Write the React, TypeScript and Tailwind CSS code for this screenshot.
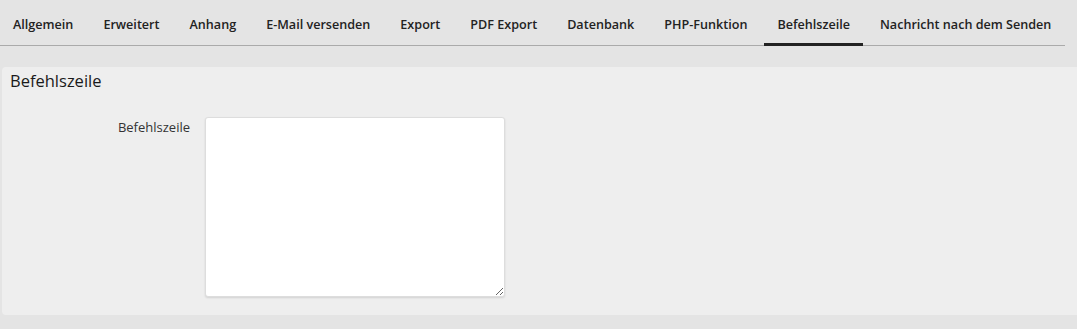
const tabs = [
  "Allgemein",
  "Erweitert",
  "Anhang",
  "E-Mail versenden",
  "Export",
  "PDF Export",
  "Datenbank",
  "PHP-Funktion",
  "Befehlszeile",
  "Nachricht nach dem Senden",
];

export default function App() {
  return (
    <div
      className="h-[329px] w-full overflow-hidden bg-[#e4e4e4] text-[#222]"
      style={{ fontFamily: '"Open Sans", sans-serif' }}
    >
      {/* tab bar */}
      <div className="mr-[12px] flex h-[46px] gap-[4px] border-b border-[#aaa]">
        {tabs.map((t) => (
          <div
            key={t}
            className={
              "flex h-[46px] items-center px-[13px] pt-[4px] text-[12.6px] font-semibold whitespace-nowrap " +
              (t === "Befehlszeile" ? "border-b-[3px] border-[#222] pt-[7px]" : "")
            }
          >
            {t}
          </div>
        ))}
      </div>

      {/* panel */}
      <div className="mt-[21px] ml-[2px] h-[248px] rounded-l-[4px] bg-[#eeeeee] px-[8px] pt-[3px]">
        <h2 className="text-[16.5px] leading-[22px] font-medium text-[#1a1a1a]">Befehlszeile</h2>
        <div className="mt-[25px] flex">
          <label className="w-[180px] pt-[1px] text-right text-[13px] leading-[18px] text-[#333]">
            Befehlszeile
          </label>
          <textarea className="ml-[15px] h-[180px] w-[300px] resize-y rounded-[3px] border border-[#ddd] bg-white shadow-[0_1px_2px_rgba(0,0,0,0.12)] outline-none" />
        </div>
      </div>
    </div>
  );
}
